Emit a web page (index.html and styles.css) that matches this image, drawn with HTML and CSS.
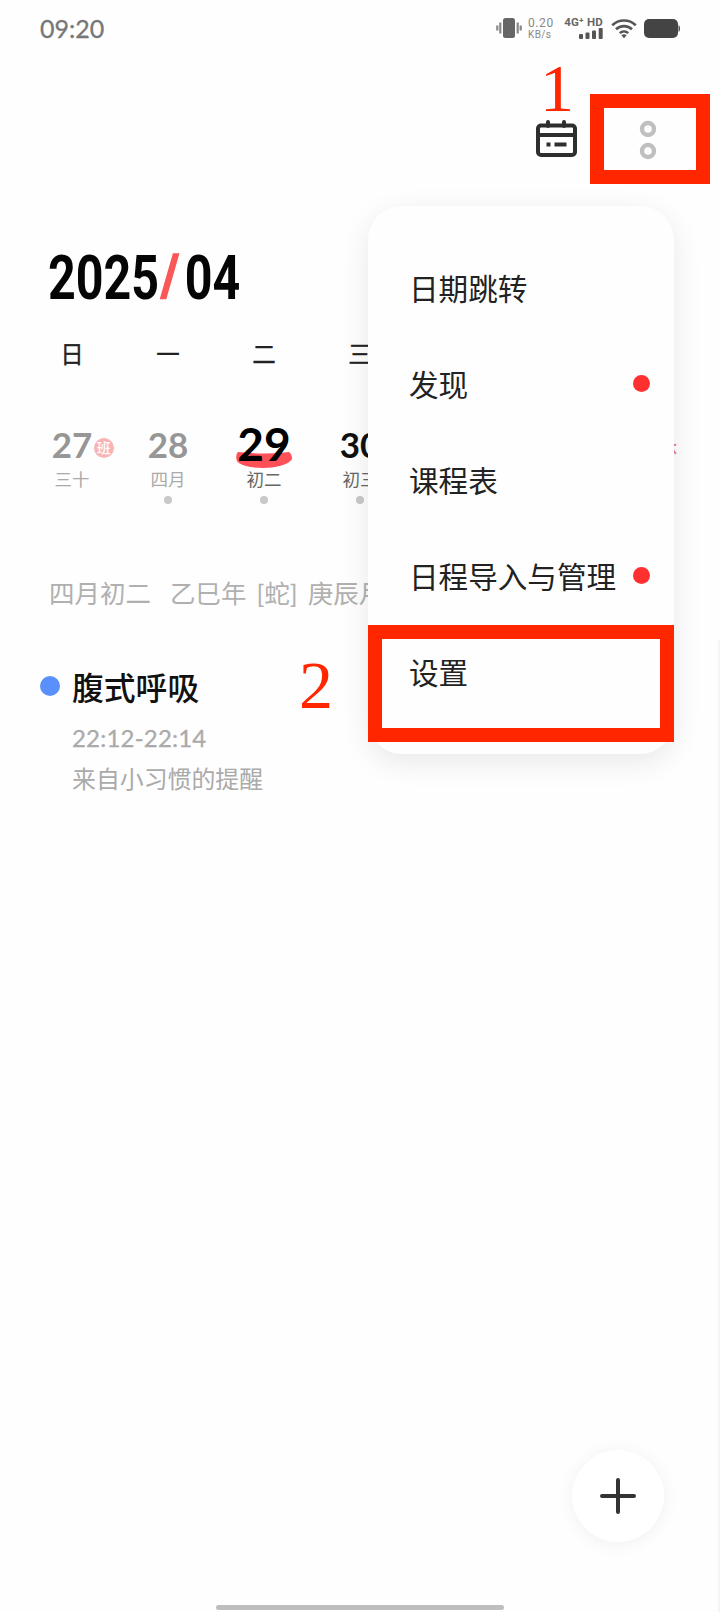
FILE: index.html
```html
<!DOCTYPE html>
<html lang="zh-CN">
<head>
<meta charset="utf-8">
<title>日历</title>
<link rel="stylesheet" href="styles.css">
</head>
<body>
<main class="screen">
  <header class="status">
    <span class="clock">09:20</span>
    <div class="status-icons">
      <svg class="i-vibrate" width="26" height="22" viewBox="0 0 26 22"><rect x="7" y="1" width="12" height="20" rx="2.5" fill="#666"/><path d="M4.3 5.5v11M21.7 5.5v11M1.3 8.5v5M24.7 8.5v5" stroke="#888" stroke-width="2.2" fill="none"/></svg>
      <div class="speed"><span class="speed-n">0.20</span><span class="speed-u">KB/s</span></div>
      <div class="net">
        <span class="net-t">4G⁺ HD</span>
        <svg width="24" height="11" viewBox="0 0 24 11" fill="#555"><rect x="0" y="6" width="4" height="5" rx="1"/><rect x="6.5" y="4.5" width="4" height="6.5" rx="1"/><rect x="13" y="2.5" width="4" height="8.5" rx="1"/><rect x="19.7" y="0" width="4" height="11" rx="1"/></svg>
      </div>
      <svg class="i-wifi" width="26" height="21" viewBox="0 0 26 21"><g fill="none" stroke="#555" stroke-width="2.6"><path d="M1.2 7.2a17 17 0 0 1 23.6 0"/><path d="M5 11.3a11.6 11.6 0 0 1 16 0"/><path d="M8.8 15.1a6.2 6.2 0 0 1 8.4 0"/></g><path d="M10.3 17.2q2.7-1.8 5.4 0L13 20.2z" fill="#555"/></svg>
      <svg class="i-battery" width="36" height="19" viewBox="0 0 36 19" fill="#444"><rect x="0" y="0" width="34" height="19" rx="5"/><path d="M34.5 6q1.5.5 1.5 3.5t-1.5 3.5z"/></svg>
    </div>
  </header>

  <nav class="toolbar">
    <svg class="i-calendar" width="42" height="38" viewBox="0 0 42 38"><g fill="none" stroke="#2e2e2e" stroke-width="4"><rect x="3" y="5.500" width="37" height="29.500" rx="3"/><path d="M3 15h37"/><path d="M13 2v4M29 2v4" stroke-linecap="round"/></g><path d="M11.500 22.500h4v4h-4zM19.500 22.500h12v4h-12z" fill="#2e2e2e"/></svg>
    <svg class="i-more" width="18" height="40" viewBox="0 0 18 40" fill="none" stroke="#bfbfbf" stroke-width="4.400"><circle cx="9" cy="9" r="6"/><circle cx="9" cy="31" r="6"/></svg>
  </nav>

  <h1 class="month"><span>2025</span><span class="slash">/</span><span>04</span></h1>

  <section class="week">
    <div class="day past"><span class="wd">日</span><span class="num">27<i class="badge work">班</i></span><span class="lunar">三十</span></div>
    <div class="day past"><span class="wd">一</span><span class="num">28</span><span class="lunar">四月</span><i class="mark"></i></div>
    <div class="day today"><span class="wd">二</span><span class="num"><svg class="blob" width="56" height="18" viewBox="0 0 56 18"><path d="M2 1Q28 4 53 1q3 2 3 7c-3 6-18 9-29 9C14 17 3 14 1 10Q-1 4 2 1z" fill="#ff5058"/></svg><b>29</b></span><span class="lunar">初二</span><i class="mark"></i></div>
    <div class="day"><span class="wd">三</span><span class="num">30</span><span class="lunar">初三</span><i class="mark"></i></div>
    <div class="day"></div>
    <div class="day"></div>
    <div class="day holiday"><span class="num"><i class="badge rest">休</i></span></div>
  </section>

  <p class="almanac"><span>四月初二</span><span>乙巳年</span><span>[蛇]</span><span>庚辰月</span></p>

  <article class="event">
    <i class="event-dot"></i>
    <div class="event-body">
      <h2>腹式呼吸</h2>
      <p class="time">22:12-22:14</p>
      <p class="source">来自小习惯的提醒</p>
    </div>
  </article>

  <ul class="menu">
    <li>日期跳转</li>
    <li>发现<i class="dot"></i></li>
    <li>课程表</li>
    <li>日程导入与管理<i class="dot"></i></li>
    <li>设置</li>
  </ul>

  <div class="frame frame-more"></div>
  <div class="frame frame-settings"></div>
  <span class="step step-1">1</span>
  <span class="step step-2">2</span>

  <button class="fab" aria-label="新建"><svg width="36" height="36" viewBox="0 0 36 36"><path d="M18 2v32M2 18h32" stroke="#333" stroke-width="4" stroke-linecap="round"/></svg></button>
  <div class="edge"></div>
  <div class="home"></div>
</main>
</body>
</html>
```
FILE: styles.css
```css
* { box-sizing: border-box; margin: 0; padding: 0; }
body { background: #fefefe; font-family: "Lato", "Noto Sans CJK SC", sans-serif; color: #222; }
i { font-style: normal; }
.screen { position: relative; width: 720px; height: 1612px; overflow: hidden; background: #fefefe; display: flex; flex-direction: column; }

.status { height: 56px; display: flex; justify-content: space-between; padding: 0 40px; }
.clock { font-size: 25px; line-height: 56px; color: #777; -webkit-text-stroke: .3px #777; }
.status-icons { display: flex; align-items: flex-start; }
.i-vibrate { margin-top: 17px; }
.speed { width: 26px; margin: 18px 0 0 6px; display: flex; flex-direction: column; color: #888; font-family: Roboto, sans-serif; }
.speed-n { font-size: 12px; line-height: 11px; letter-spacing: .6px; }
.speed-u { font-size: 10px; line-height: 11px; letter-spacing: .4px; }
.net { width: 40px; margin: 16px 0 0 9px; display: flex; flex-direction: column; align-items: flex-end; }
.net-t { font: bold 11.5px/12px Roboto, sans-serif; color: #666; white-space: nowrap; letter-spacing: .2px; }
.i-wifi { margin: 18px 0 0 8px; }
.i-battery { margin: 19px 0 0 7px; }

.toolbar { flex: none; height: 162px; display: flex; justify-content: flex-end; padding: 64px 63px 0 0; }
.i-calendar { margin-right: 62px; }

.month { flex: none; height: 88px; width: 260px; padding: 29px 0 0 0; margin-left: 48px; display: flex; font: 700 62px/62px Roboto, sans-serif; color: #050505; transform: scaleX(.78); transform-origin: 0 0; }
.slash { width: 24px; margin: -2px 5px 0 4px; font-size: 57px; color: #fa5757; -webkit-text-stroke: 1.6px #fa5757; transform: scaleX(1.1); }

.week { flex: none; height: 244px; padding: 32px 24px 0; display: grid; grid-template-columns: repeat(7, 96px); }
.day { display: flex; flex-direction: column; align-items: center; }
.wd { height: 36px; font-size: 23.5px; line-height: 32px; color: #222; -webkit-text-stroke: .3px #222; }
.num { position: relative; margin-top: 45px; height: 50px; font-size: 35px; line-height: 50px; font-weight: 700; color: #111; }
.past .num { color: #969696; }
.lunar { font-size: 17.5px; line-height: 24px; margin-top: -1px; color: #666; }
.past .lunar { color: #aaa; }
.mark { width: 8px; height: 8px; margin-top: 4px; border-radius: 50%; background: #c8c8c8; }
.today b { position: relative; font-size: 46px; font-weight: 700; color: #000; }
.today .blob { position: absolute; left: -1px; top: 32px; }
.badge { position: absolute; width: 20px; height: 20px; border-radius: 50%; font-size: 14px; line-height: 20px; text-align: center; font-weight: 500; }
.work { left: 42px; top: 19px; background: #f8b4b4; color: #fff; }
.holiday .num { margin-top: 81px; width: 40px; }
.rest { left: 30px; top: 19px; color: #e87880; font-size: 18px; }

.almanac { flex: none; height: 60px; padding: 25px 0 0 49px; display: flex; font-size: 25.5px; line-height: 36px; color: #b0b0b0; white-space: nowrap; }
.almanac span:nth-child(2) { margin-left: 19px; }
.almanac span:nth-child(3) { margin-left: 10px; }
.almanac span:nth-child(4) { margin-left: 10px; }

.event { display: flex; padding: 58px 0 0 40px; }
.event-dot { width: 20px; height: 20px; margin: 8px 12px 0 0; border-radius: 50%; background: #5a90fc; }
.event h2 { font-size: 31.8px; line-height: 40px; font-weight: 500; color: #111; }
.event .time { margin-top: 15px; font-size: 24px; line-height: 30px; color: #aaa; letter-spacing: .2px; -webkit-text-stroke: .3px #aaa; }
.event .source { margin-top: 10px; font-size: 23.9px; line-height: 32px; color: #aaa; }

.menu { position: absolute; left: 368px; top: 206px; width: 306px; height: 548px; padding: 33px 24px 0 41px; list-style: none; background: #fefefe; border-radius: 34px; box-shadow: 0 8px 30px rgba(0,0,0,.09); }
.menu li { height: 96px; display: flex; align-items: center; justify-content: space-between; font-size: 29.6px; color: #222; white-space: nowrap; }
.dot { width: 17px; height: 17px; margin-top: 1px; border-radius: 50%; background: #ff3030; }

.frame { position: absolute; border: 14px solid #ff2600; }
.frame-more { left: 590px; top: 94px; width: 120px; height: 90px; }
.frame-settings { left: 368px; top: 625px; width: 306px; height: 117px; }
.step { position: absolute; font: 68px/68px "Liberation Serif", serif; color: #ff2600; }
.step-1 { left: 540px; top: 54px; }
.step-2 { left: 299px; top: 651px; }

.fab { position: absolute; left: 572px; top: 1450px; width: 92px; height: 92px; border: 0; border-radius: 50%; background: #fff; box-shadow: 0 2px 18px rgba(0,0,0,.06); display: grid; place-items: center; }
.edge { position: absolute; right: 0; top: 640px; width: 2px; height: 972px; background: #f5f5f5; }
.home { position: absolute; left: 216px; top: 1605px; width: 288px; height: 5px; border-radius: 3px; background: #bebebe; }
```
